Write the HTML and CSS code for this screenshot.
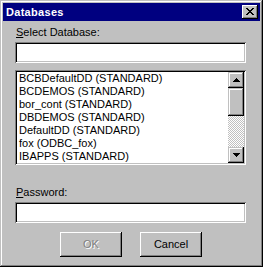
FILE: index.html
```html
<!DOCTYPE html>
<html lang="en">
<head>
    <meta charset="UTF-8">
    <title>Databases</title>
    <link rel="stylesheet" href="styles.css">
</head>
<body>
    <div class="window">
        <div class="titlebar">
            <span class="title">Databases</span>
            <div class="close-btn">
                <svg width="8" height="7" viewBox="0 0 8 7" shape-rendering="crispEdges">
                    <path d="M0 0h2v1H0zM6 0h2v1H6zM1 1h2v1H1zM5 1h2v1H5zM2 2h4v1H2zM3 3h2v1H3zM2 4h4v1H2zM1 5h2v1H1zM5 5h2v1H5zM0 6h2v1H0zM6 6h2v1H6z" fill="#000"/>
                </svg>
            </div>
        </div>

        <div class="content">
            <div class="field-label"><u>S</u>elect Database:</div>
            <div class="edit"></div>

            <div class="listbox">
                <ul class="items">
                    <li>BCBDefaultDD (STANDARD)</li>
                    <li>BCDEMOS (STANDARD)</li>
                    <li>bor_cont (STANDARD)</li>
                    <li>DBDEMOS (STANDARD)</li>
                    <li>DefaultDD (STANDARD)</li>
                    <li>fox (ODBC_fox)</li>
                    <li>IBAPPS (STANDARD)</li>
                </ul>
                <div class="scrollbar">
                    <div class="sb-btn">
                        <svg width="7" height="4" viewBox="0 0 7 4" shape-rendering="crispEdges"><path d="M3 0h1v1h1v1h1v1h1v1H0V3h1V2h1V1h1z" fill="#000"/></svg>
                    </div>
                    <div class="sb-thumb"></div>
                    <div class="sb-track"></div>
                    <div class="sb-btn">
                        <svg width="7" height="4" viewBox="0 0 7 4" shape-rendering="crispEdges"><path d="M0 0h7v1H6v1H5v1H4v1H3V3H2V2H1V1H0z" fill="#000"/></svg>
                    </div>
                </div>
            </div>

            <div class="field-label password-label"><u>P</u>assword:</div>
            <div class="edit"></div>

            <div class="buttons">
                <div class="btn disabled">OK</div>
                <div class="btn">Cancel</div>
            </div>
        </div>
    </div>
</body>
</html>
```

FILE: styles.css
```css
body {
    margin: 0;
    background: #c0c0c0;
    font-family: "Liberation Sans", Arial, sans-serif;
    font-size: 11px;
    color: #000;
}

.window {
    width: 263px;
    height: 267px;
    box-sizing: border-box;
    padding: 3px;
    background: #c0c0c0;
    box-shadow: inset -1px -1px #000, inset 1px 1px #c0c0c0,
                inset -2px -2px #808080, inset 2px 2px #fff;
}

.titlebar {
    height: 18px;
    background: #000080;
    display: flex;
    align-items: center;
    justify-content: space-between;
    padding: 0 2px 0 3px;
}

.title {
    color: #fff;
    font-weight: bold;
    font-size: 11px;
    letter-spacing: 0.3px;
}

.close-btn {
    width: 16px;
    height: 14px;
    box-sizing: border-box;
    background: #c0c0c0;
    display: flex;
    align-items: center;
    justify-content: center;
    box-shadow: inset -1px -1px #000, inset 1px 1px #fff,
                inset -2px -2px #808080, inset 2px 2px #c0c0c0;
}

.close-btn svg {
    display: block;
    margin: 0 1px 1px 0;
}

.content {
    padding: 5px 0 0 12px;
}

.field-label {
    height: 13px;
    line-height: 13px;
    margin-bottom: 3px;
    padding-left: 1px;
}

.password-label {
    margin-top: 21px;
}

.edit {
    width: 231px;
    height: 21px;
    box-sizing: border-box;
    background: #fff;
    box-shadow: inset 1px 1px #808080, inset -1px -1px #fff,
                inset 2px 2px #000, inset -2px -2px #c0c0c0;
}

.listbox {
    width: 231px;
    height: 95px;
    margin-top: 7px;
    box-sizing: border-box;
    padding: 2px;
    background: #fff;
    display: flex;
    box-shadow: inset 1px 1px #808080, inset -1px -1px #fff,
                inset 2px 2px #000, inset -2px -2px #c0c0c0;
}

.items {
    list-style: none;
    margin: 0;
    padding: 0 0 0 2px;
    flex: 1;
    overflow: hidden;
}

.items li {
    height: 13px;
    line-height: 13px;
    white-space: nowrap;
}

.scrollbar {
    width: 16px;
    display: flex;
    flex-direction: column;
}

.sb-btn, .sb-thumb {
    height: 16px;
    box-sizing: border-box;
    background: #c0c0c0;
    box-shadow: inset -1px -1px #000, inset 1px 1px #c0c0c0,
                inset -2px -2px #808080, inset 2px 2px #fff;
}

.sb-btn {
    display: flex;
    align-items: center;
    justify-content: center;
}

.sb-btn svg {
    display: block;
}

.sb-thumb {
    height: 28px;
}

.sb-track {
    flex: 1;
    background: repeating-conic-gradient(#fff 0 25%, #c0c0c0 0 50%) 0 0 / 2px 2px;
}

.buttons {
    display: flex;
    gap: 18px;
    margin: 9px 0 0 45px;
}

.btn {
    width: 62px;
    height: 25px;
    box-sizing: border-box;
    line-height: 25px;
    text-align: center;
    background: #c0c0c0;
    box-shadow: inset -1px -1px #000, inset 1px 1px #fff,
                inset -2px -2px #808080, inset 2px 2px #c0c0c0;
}

.btn.disabled {
    color: #808080;
    text-shadow: 1px 1px #fff;
}
```
